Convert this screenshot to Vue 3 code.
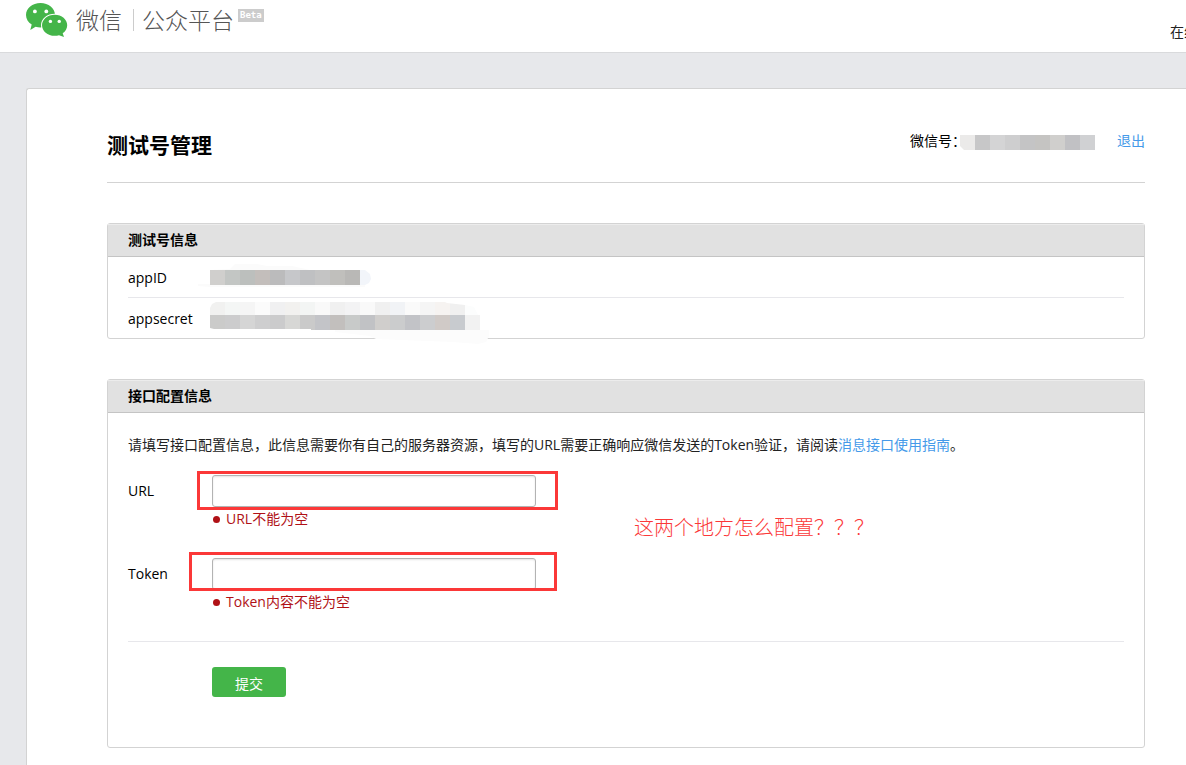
<script setup>
import { ref } from 'vue'

const url = ref('')
const token = ref('')

const strip = (colors, y, height) =>
  colors.map((fill, i) => ({ fill, x: i * 15, y, height }))

const accountBlocks = strip(
  ['#ebeae9', '#c7c7c8', '#d4d4d5', '#cececf', '#c4c4c5', '#c5c4c2', '#d0cfcd', '#c1c1c4', '#d0d1d3'], 0, 15
)
const appIdBlocks = strip(
  ['#d0cfcd', '#c3c6c4', '#bcbfbd', '#c3bebb', '#bbbbbc', '#c6c7ca', '#bfc0c2', '#c4c4c4', '#c0bfbc', '#b9b8b6'], 15, 15
)
const secretLight = strip(
  ['#f1f1f0', '#f4f6f5', '#f5f5f5', '#fbfbfb', '#f0f0f1', '#f2f1ef', '#f3f5f4', '#f9f9f9', '#f0f0f0', '#f3f3f4', '#f9f9f9', '#f0f0f0', '#f1f3f6', '#fafafa', '#f5f5f5', '#f6f3f1', '#f0f0f0'], 6, 13
)
const secretDark = strip(
  ['#cbcbca', '#cccccd', '#d5d5d5', '#cececf', '#cbcbcc', '#d7d7d5', '#cacaca', '#c3c4c8', '#c2bfbd', '#c8cac9', '#c1c2c5', '#d0cecc', '#cbcccd', '#c2c3c7', '#cccdcf', '#d0cac7', '#c8cbcf', '#f2f2f2'], 19, 15
)
</script>

<template>
  <div class="page">
    <header class="topbar">
      <a class="brand" href="#" aria-label="微信公众平台">
        <svg class="mark" viewBox="0 0 42 36" aria-hidden="true">
          <path fill="#44b549" d="M14.500 1C6.400 1 0 6.300 0 13c0 3.900 2.200 7.300 5.700 9.600L4.300 28l5.300-3.300c1.600.5 3.200.7 4.900.7 8.100 0 14.500-5.400 14.500-12.300S22.600 1 14.500 1z" />
          <path fill="#44b549" stroke="#fff" stroke-width="2" paint-order="stroke" d="M28.700 12.700c-7.100 0-12.700 4.700-12.700 10.500s5.600 10.600 12.700 10.600c1.500 0 3-.2 4.300-.6l5 1.800-1.300-3.700c2.800-2 4.500-4.900 4.500-8.100 0-5.800-5.500-10.500-12.500-10.500z" />
          <g fill="#fff">
            <circle cx="8.900" cy="9.400" r="1.900" />
            <circle cx="20.300" cy="9.400" r="1.900" />
            <circle cx="24.400" cy="19.400" r="1.700" />
            <circle cx="33.200" cy="19.400" r="1.700" />
          </g>
        </svg>
        <span class="name">微信</span>
        <span class="product">公众平台</span>
        <sup class="beta">Beta</sup>
      </a>
      <nav class="links"><a href="#">在线</a></nav>
    </header>

    <main class="card">
      <div class="title">
        <h1>测试号管理</h1>
        <div class="account">
          <span>微信号：</span>
          <svg class="account-id" width="135" height="15" aria-hidden="true">
            <rect v-for="b in accountBlocks" :key="b.x" :x="b.x" :y="b.y" width="15" :height="b.height" :fill="b.fill" />
            <path d="M0 11v4h4z" fill="#fff" />
          </svg>
          <a href="#">退出</a>
        </div>
      </div>

      <section class="panel">
        <h2>测试号信息</h2>
        <dl class="info">
          <div class="row">
            <dt>appID</dt>
            <dd>
              <svg class="masked" width="300" height="42" aria-hidden="true">
                <path d="M20 14l5-5h22l10 2h25l18 4H155v17H0l-12-1v-2H0V15z" fill="#fbfbfb" />
                <path d="M150 15h5l5 4 1 5-2 4-4 2h-5z" fill="#f2f5fa" />
                <rect v-for="b in appIdBlocks" :key="b.x" :x="b.x" :y="b.y" width="15" :height="b.height" :fill="b.fill" />
              </svg>
            </dd>
          </div>
          <div class="row">
            <dt>appsecret</dt>
            <dd>
              <svg class="masked" width="300" height="48" aria-hidden="true">
                <path d="M125 34h154v6l-3 6-8 2-25-2-77-3-6-3-35-4z" fill="#fcfcfc" />
                <path d="M255 9l9 2 4 8h-13z" fill="#fcfdfd" />
                <rect v-for="b in secretLight" :key="b.x" :x="b.x" :y="b.y" width="15" :height="b.height" :fill="b.fill" />
                <rect v-for="b in secretDark" :key="b.x" :x="b.x" :y="b.y" width="15" :height="b.height" :fill="b.fill" />
                <path d="M0 6h6l-4 2-2 4zM0 32l4 1h97v1H0zM235 6h20v3l-18-2z" fill="#fff" />
              </svg>
            </dd>
          </div>
        </dl>
      </section>

      <section class="panel">
        <h2>接口配置信息</h2>
        <form class="config" @submit.prevent>
          <p class="hint">请填写接口配置信息，此信息需要你有自己的服务器资源，填写的URL需要正确响应微信发送的Token验证，请阅读<a href="#">消息接口使用指南</a>。</p>
          <div class="field">
            <label for="url">URL</label>
            <div class="control">
              <input id="url" v-model="url" type="text" />
              <p class="error">URL不能为空</p>
              <span class="frame frame-url"></span>
            </div>
          </div>
          <div class="field">
            <label for="token">Token</label>
            <div class="control">
              <input id="token" v-model="token" type="text" />
              <p class="error">Token内容不能为空</p>
              <span class="frame frame-token"></span>
            </div>
          </div>
          <div class="actions">
            <button type="submit">提交</button>
          </div>
          <span class="note">这两个地方怎么配置？？？</span>
        </form>
      </section>
    </main>
  </div>
</template>

<style>
body {
  margin: 0;
  background: #e7e8eb;
}
</style>

<style scoped>
.page {
  min-height: 100vh;
  overflow: hidden;
  display: flex;
  flex-direction: column;
  box-sizing: border-box;
  color: #000;
  font: 14px/22px "Open Sans", "Noto Sans CJK SC", sans-serif;
  font-kerning: none;
}
h1, h2, p, dl, dd {
  margin: 0;
}
a {
  color: #459ae9;
  text-decoration: none;
}
.topbar {
  display: flex;
  justify-content: space-between;
  height: 52px;
  padding-left: 26px;
  background: #fff;
  border-bottom: 1px solid #d9dadc;
}
.brand {
  display: flex;
  align-items: center;
  height: 40px;
  color: #555;
  font-size: 23px;
  font-weight: 300;
}
.mark {
  width: 42px;
  height: 36px;
  margin-right: 8px;
}
.product {
  margin-left: 11px;
  padding-left: 8px;
  border-left: 1px solid #ccc;
}
.beta {
  align-self: flex-start;
  margin: 9px 0 0 4px;
  padding: 0 2px;
  background: #ccc;
  color: #fff;
  font: bold 9px/13px "DejaVu Sans Mono", monospace;
}
.links {
  flex: none;
  margin: 21px -12px 0 0;
}
.links a {
  color: #222;
}
.card {
  flex: 1;
  margin: 35px 0 0 26px;
  padding: 0 41px 17px 80px;
  background: #fff;
  border: solid #d3d3d3;
  border-width: 1px 0 0 1px;
  border-top-left-radius: 3px;
}
.title {
  display: flex;
  justify-content: space-between;
  padding: 40px 0 20px;
  border-bottom: 1px solid #d3d3d3;
}
h1 {
  font-size: 21px;
  line-height: 33px;
}
.account {
  display: flex;
  align-items: center;
  height: 24px;
}
.account-id {
  margin: 2px 22px 0 -6px;
}
.panel {
  margin-top: 40px;
  border: 1px solid #d3d3d3;
  border-radius: 3px;
}
h2 {
  padding: 0 20px;
  background: #e1e1e1;
  border-bottom: 1px solid #c4c4c4;
  box-shadow: inset 0 1px #ececec;
  font-size: 14px;
  line-height: 32px;
}
.info {
  padding: 0 20px;
}
.row {
  display: flex;
  height: 40px;
  line-height: 42px;
}
.row + .row {
  border-top: 1px solid #e7e7eb;
}
.row dt {
  width: 82px;
}
.row dd {
  position: relative;
}
.masked {
  position: absolute;
  top: -2px;
  left: 0;
  overflow: visible;
}
.config {
  position: relative;
  padding: 21px 20px 50px;
}
.hint {
  color: #222;
}
.field {
  display: flex;
  margin-top: 19px;
}
.field + .field {
  margin-top: 28px;
}
.field label {
  width: 84px;
  line-height: 32px;
}
.control {
  position: relative;
  flex: 0 1 324px;
}
input {
  display: block;
  box-sizing: border-box;
  width: 100%;
  height: 32px;
  padding: 0 10px;
  background: #fff;
  border: 1px solid #b3b3b3;
  border-radius: 3px;
  box-shadow: inset 0 1px 2px #e4e4e4;
  font: inherit;
}
.error {
  display: flex;
  align-items: center;
  margin-top: 1px;
  color: #b01116;
}
.error::before {
  content: "";
  width: 7px;
  height: 7px;
  margin: 0 6px 0 1px;
  border-radius: 50%;
  background: #b01116;
}
.frame {
  position: absolute;
  border: 3px solid #fb3838;
  pointer-events: none;
}
.frame-url {
  top: -4px;
  left: -15px;
  right: -22px;
  height: 33px;
}
.frame-token {
  top: -6px;
  left: -23px;
  right: -21px;
  height: 33px;
}
.actions {
  margin-top: 28px;
  padding: 25px 0 0 84px;
  border-top: 1px solid #e7e7eb;
}
button {
  display: block;
  height: 30px;
  padding: 3px 23px 0;
  background: #44b549;
  border: 0;
  border-radius: 3px;
  color: #fff;
  font: inherit;
}
.note {
  position: absolute;
  top: 101px;
  left: 526px;
  color: #fb3838;
  font: 20px/28px "Liberation Serif", "Noto Sans CJK SC", serif;
  font-weight: 300;
}
</style>
